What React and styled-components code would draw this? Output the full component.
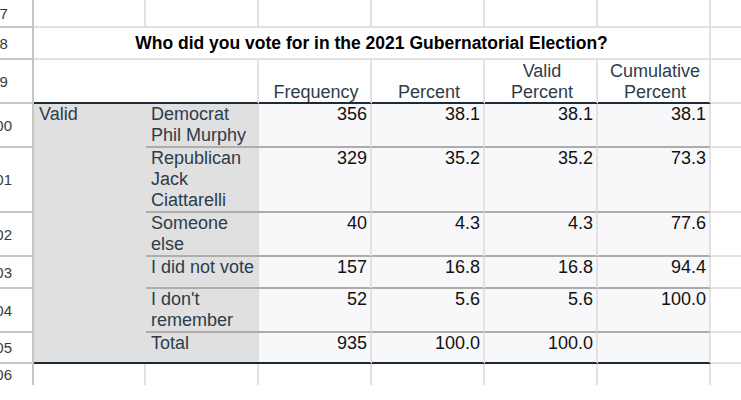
import React from "react";
import styled, { createGlobalStyle } from "styled-components";

const GRID = "#e2e2e2";
const HEAD_GRID = "#c6c6c6";
const RULE = "#1d2b36";
const SEP = "#adadad";
const SLATE = "#2d3c4a";

const GlobalStyle = createGlobalStyle`
  html, body {
    margin: 0;
    padding: 0;
    background: #fff;
  }
  body {
    font-family: "Liberation Sans", Arial, sans-serif;
  }
`;

const Sheet = styled.div`
  display: grid;
  grid-template-columns: 34px 112px repeat(5, 113px) 60px;
  grid-template-rows: 28px 32px 44px 44px 65px 44px 32px 44px 31px 21px;
  width: 741px;
  overflow: hidden;
`;

const RowHead = styled.div`
  display: flex;
  align-items: center;
  overflow: hidden;
  border-right: 2px solid ${HEAD_GRID};
  border-bottom: ${(p) => (p.$last ? "none" : `2px solid ${HEAD_GRID}`)};
  font-size: 15px;
  color: #3a3a3a;
`;

// the sheet is scrolled a little, so the row numbers are cut on the left
const RowNum = styled.span`
  flex: none;
  width: 47px;
  margin-left: -24px;
  text-align: center;
`;

const Cell = styled.div`
  border-right: ${(p) => (p.$open ? "none" : `2px solid ${GRID}`)};
  border-bottom: ${(p) => (p.$last ? "none" : `2px solid ${GRID}`)};
`;

const TitleCell = styled.div`
  grid-column: span 6;
  display: flex;
  align-items: center;
  justify-content: center;
  border-right: 2px solid ${GRID};
  border-bottom: 2px solid ${GRID};
  font-size: 17.5px;
  font-weight: 700;
  color: #000;
  white-space: nowrap;
`;

const HeadCell = styled.div`
  grid-column: span ${(p) => p.$span || 1};
  display: flex;
  flex-direction: column;
  justify-content: flex-end;
  align-items: center;
  padding-left: 3px;
  border-right: 2px solid ${GRID};
  border-bottom: 2px solid ${RULE};
  font-size: 18px;
  color: ${SLATE};
  text-align: center;
  white-space: pre;
`;

const HeadText = styled.span`
  margin-bottom: -1px;
`;

const GroupCell = styled.div`
  grid-row: span ${(p) => p.$rows};
  background: #e0e0e0;
  border-bottom: 2px solid ${RULE};
  padding-left: 5px;
  font-size: 18px;
  color: ${SLATE};
`;

const LabelCell = styled.div`
  background: #e0e0e0;
  border-bottom: 2px solid ${(p) => (p.$total ? RULE : SEP)};
  padding-left: 5px;
  font-size: 18px;
  color: ${SLATE};
  white-space: pre;
`;

const DataCell = styled.div`
  background: #f8f8fa;
  border-right: 2px solid ${GRID};
  border-bottom: 2px solid ${(p) => (p.$total ? RULE : SEP)};
  padding-right: 3px;
  text-align: right;
  font-size: 18px;
  color: #111;
`;

const rows = [
  { label: "Democrat\nPhil Murphy", freq: "356", pct: "38.1", valid: "38.1", cum: "38.1" },
  { label: "Republican\nJack\nCiattarelli", freq: "329", pct: "35.2", valid: "35.2", cum: "73.3" },
  { label: "Someone\nelse", freq: "40", pct: "4.3", valid: "4.3", cum: "77.6" },
  { label: "I did not vote", freq: "157", pct: "16.8", valid: "16.8", cum: "94.4" },
  { label: "I don't\nremember", freq: "52", pct: "5.6", valid: "5.6", cum: "100.0" },
  { label: "Total", freq: "935", pct: "100.0", valid: "100.0", cum: "", total: true },
];

function EmptyRow({ num, last }) {
  return (
    <>
      <RowHead $last={last}>
        <RowNum>{num}</RowNum>
      </RowHead>
      {Array.from({ length: 7 }).map((_, i) => (
        <Cell key={i} $last={last} $open={i === 6} />
      ))}
    </>
  );
}

export default function App() {
  return (
    <>
      <GlobalStyle />
      <Sheet>
        <EmptyRow num="97" />

        <RowHead>
          <RowNum>98</RowNum>
        </RowHead>
        <TitleCell>Who did you vote for in the 2021 Gubernatorial Election?</TitleCell>
        <Cell $open />

        <RowHead>
          <RowNum>99</RowNum>
        </RowHead>
        <HeadCell $span={2} />
        <HeadCell>
          <HeadText>Frequency</HeadText>
        </HeadCell>
        <HeadCell>
          <HeadText>Percent</HeadText>
        </HeadCell>
        <HeadCell>
          <HeadText>{"Valid\nPercent"}</HeadText>
        </HeadCell>
        <HeadCell>
          <HeadText>{"Cumulative\nPercent"}</HeadText>
        </HeadCell>
        <Cell $open />

        {rows.map((r, i) => (
          <React.Fragment key={r.label}>
            <RowHead>
              <RowNum>{100 + i}</RowNum>
            </RowHead>
            {i === 0 && <GroupCell $rows={rows.length}>Valid</GroupCell>}
            <LabelCell $total={r.total}>{r.label}</LabelCell>
            <DataCell $total={r.total}>{r.freq}</DataCell>
            <DataCell $total={r.total}>{r.pct}</DataCell>
            <DataCell $total={r.total}>{r.valid}</DataCell>
            <DataCell $total={r.total}>{r.cum}</DataCell>
            <Cell $open />
          </React.Fragment>
        ))}

        <EmptyRow num="106" last />
      </Sheet>
    </>
  );
}
